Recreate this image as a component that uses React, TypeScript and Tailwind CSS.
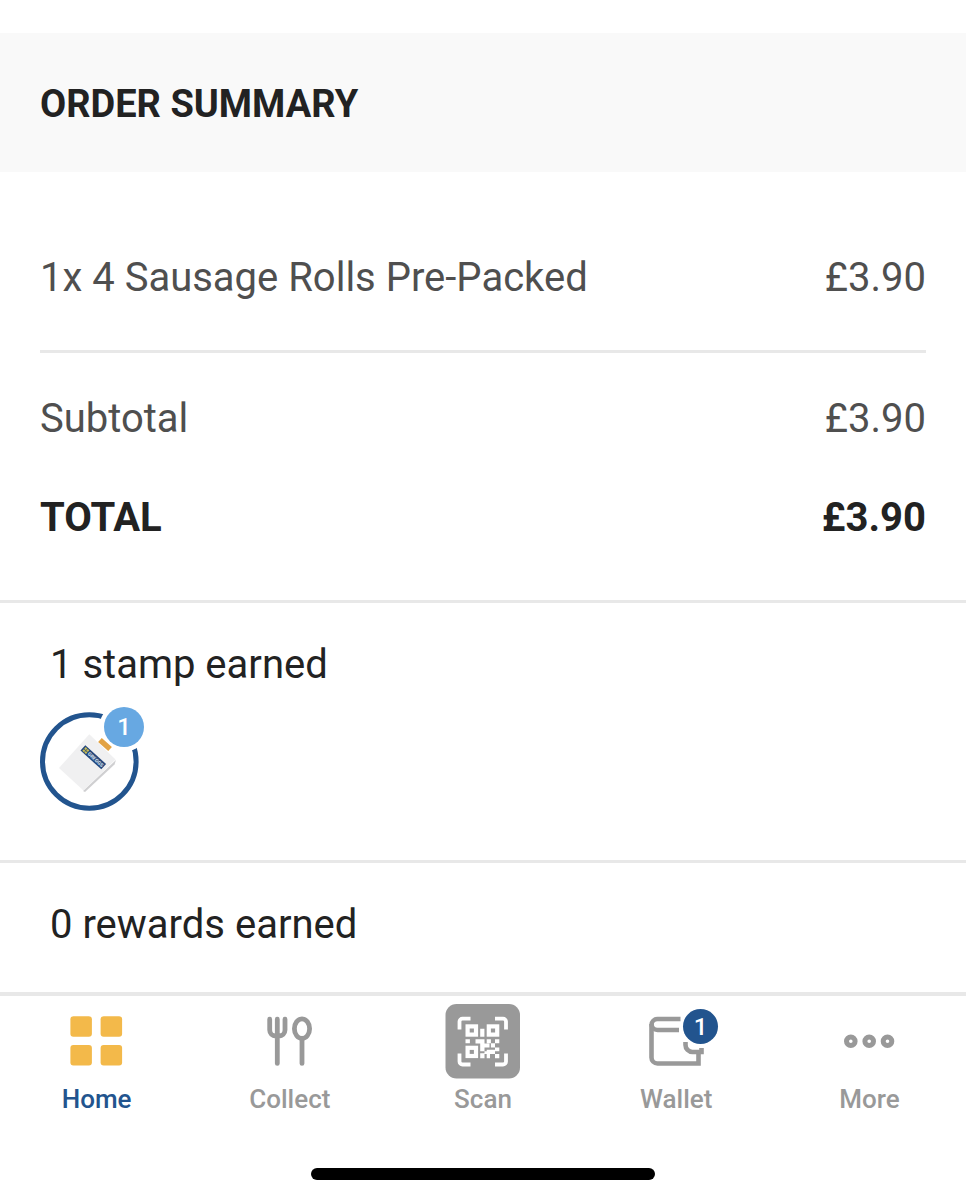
import type { ReactNode } from "react"

const font = "font-[Roboto,'Liberation_Sans',sans-serif]"

const HomeIcon = () => (
  <svg width="88" height="75" viewBox="0 0 88 75" fill="#f3b94a" aria-hidden="true">
    <rect x="17.4" y="12.3" width="21.5" height="20.5" rx="3" />
    <rect x="47.6" y="12.3" width="21.5" height="20.5" rx="3" />
    <rect x="17.4" y="41" width="21.5" height="20.5" rx="3" />
    <rect x="47.6" y="41" width="21.5" height="20.5" rx="3" />
  </svg>
)

const CollectIcon = () => (
  <svg width="88" height="75" viewBox="0 0 88 75" fill="none" stroke="#999" strokeWidth="4.8" strokeLinecap="round" aria-hidden="true">
    <path d="M23.7 15.2V26a6 6 0 0 0 6 6h3.3a6 6 0 0 0 6-6V15.2M31.3 15.2V59.4M56 36V59.4" />
    <ellipse cx="56" cy="24.7" rx="7.6" ry="9.8" />
  </svg>
)

const ScanIcon = () => (
  <svg width="75" height="75" viewBox="0 0 75 75" aria-hidden="true">
    <rect x="0.5" width="74.5" height="74.5" rx="11" fill="#999" />
    <g fill="none" stroke="#fff" strokeWidth="3.8">
      <path d="M14.5 25.5V17.6a3 3 0 0 1 3-3h8M50 14.6h8a3 3 0 0 1 3 3v8M61 49.5v8a3 3 0 0 1-3 3h-8M25.5 60.5h-8a3 3 0 0 1-3-3v-8" />
    </g>
    <g fill="none" stroke="#fff" strokeWidth="4.2">
      <rect x="22.6" y="22.4" width="8.4" height="8.2" />
      <rect x="43.8" y="22.4" width="8.4" height="8.2" />
      <rect x="22.6" y="43.8" width="8.4" height="8.2" />
    </g>
    <path
      fill="#fff"
      d="M35.2 24.7h4.2v8h-4.2zM20.5 35.3h4.4v4h-4.4zM30.5 35.3h9v4.2h5v4h-5v3.8h-4.300v-7.800h-4.700zM41.700 35.300h4.200v4h-4.200zM50 35.300h4.300v4H50zM45.900 39.300H50v4.300h-4.100zM50 43.600h4.300v3.700H50zM41.700 45.800h8.300v4.200h-5v4.300h-3.300v-4.300h-2.200v4.300h-4.300v-5h4.300v-2h2.200zM50 50h4.300v4.300H50z"
    />
  </svg>
)

const WalletIcon = () => (
  <svg width="88" height="75" viewBox="0 0 88 75" fill="none" stroke="#999" strokeWidth="4.6" aria-hidden="true">
    <path d="M48.5 15H25.5a6 6 0 0 0-6 6V53.5a6 6 0 0 0 6 6H66.5V48" />
    <path d="M19.5 20a6 6 0 0 0 6 6H47" />
    <path d="M53.5 38v3a7 7 0 0 0 7 7h9v-4" />
  </svg>
)

const MoreIcon = () => (
  <svg width="88" height="75" viewBox="0 0 88 75" fill="none" stroke="#999" strokeWidth="5" aria-hidden="true">
    <circle cx="25.8" cy="37.3" r="4.3" />
    <circle cx="44.2" cy="37.3" r="4.3" />
    <circle cx="62.5" cy="37.3" r="4.3" />
  </svg>
)

const StampIcon = () => (
  <svg width="99" height="99" viewBox="0 0 99 99" aria-hidden="true">
    <circle cx="49.3" cy="49.5" r="46.8" fill="#fff" stroke="#22548e" strokeWidth="5" />
    <path d="M76 48l-1.5 4.5L45 80l-2-1z" fill="#cfcfd1" />
    <path d="M49.3 22.3L75.5 47.5 43.5 78.5 19 56z" fill="#f0f0f1" />
    <circle cx="84" cy="15" r="24.5" fill="#fff" />
    <g transform="translate(53.3 45.3) rotate(42)">
      <rect x="-14" y="-3.6" width="28" height="7.2" fill="#24477c" />
      <path d="M-12.5-2.5h2.2v2.2h-2.2zM-9.8-2.5h2.2v2.2h-2.2zM-12.5.3h2.2v2.2h-2.2zM-9.8.3h2.2v2.2h-2.2z" fill="#c9bd52" />
      <text x="-6.5" y="1.9" fontSize="5" fontWeight="700" fill="#dfe6f1">GREGGS</text>
    </g>
    <rect x="-6.8" y="-2.7" width="13.6" height="5.4" fill="#e2a243" transform="translate(65 32.5) rotate(42)" />
  </svg>
)

const OrderSummary = () => (
  <table className="w-full text-[#4f4f4f]">
    <tbody className="text-left text-[40px] leading-12">
      <tr className="border-b-3 border-[#e8e8e8]">
        <th scope="row" className="pt-[82px] pb-12 font-normal">1x 4 Sausage Rolls Pre-Packed</th>
        <td className="pt-[82px] pb-12 text-right">£3.90</td>
      </tr>
      <tr>
        <th scope="row" className="pt-[42px] font-normal">Subtotal</th>
        <td className="pt-[42px] text-right">£3.90</td>
      </tr>
      <tr className="text-[#222]">
        <th scope="row" className="pt-[51px] pb-[58px] font-bold">TOTAL</th>
        <td className="pt-[51px] pb-[58px] text-right font-bold">£3.90</td>
      </tr>
    </tbody>
  </table>
)

type TabProps = {
  label: string
  icon: ReactNode
  active?: boolean
  badge?: number
}

const Tab = ({ label, icon, active, badge }: TabProps) => (
  <a href="#" aria-current={active ? "page" : undefined}
    className={`flex flex-col items-center gap-1 text-[26px] leading-8 font-medium ${active ? "text-[#22548e]" : "text-[#999]"}`}>
    <span className="relative block">
      {icon}
      {badge && (
        <span className="absolute top-[5px] right-[2px] flex size-[35px] items-center justify-center rounded-full bg-[#22548e] text-2xl text-white">
          {badge}
        </span>
      )}
    </span>
    {label}
  </a>
)

const App = () => {

  return (
    <div className={`flex min-h-screen flex-col bg-white text-[#222] ${font}`}>
      <main className="grow pt-[33px]">
        <h1 className="bg-[#f9f9f9] px-10 pt-[47px] pb-11 text-[38px] leading-12 font-bold">ORDER SUMMARY</h1>
        <section className="px-10">
          <OrderSummary />
        </section>
        <section className="border-t-3 border-[#e8e8e8] px-10 pt-[38px] pb-[49px]">
          <h2 className="mb-[23px] pl-[10px] text-[40px] leading-12">1 stamp earned</h2>
          <div className="relative size-[99px]">
            <StampIcon />
            <span className="absolute -top-[5px] -right-[5px] flex size-10 items-center justify-center rounded-full bg-[#67a8e2] text-2xl font-medium text-white">1</span>
          </div>
        </section>
        <section className="border-t-3 border-[#e8e8e8] px-10 pt-[38px] pb-[43px]">
          <h2 className="pl-[10px] text-[40px] leading-12">0 rewards earned</h2>
        </section>
      </main>
      <nav className="grid grid-cols-5 border-t-4 border-[#e8e8e8] pt-2">
        <Tab label="Home" icon={<HomeIcon />} active />
        <Tab label="Collect" icon={<CollectIcon />} />
        <Tab label="Scan" icon={<ScanIcon />} />
        <Tab label="Wallet" icon={<WalletIcon />} badge={1} />
        <Tab label="More" icon={<MoreIcon />} />
      </nav>
      <div className="mx-auto mt-[53px] mb-5 h-3 w-[344px] rounded-full bg-black" />
    </div>
  )
}

export default App
